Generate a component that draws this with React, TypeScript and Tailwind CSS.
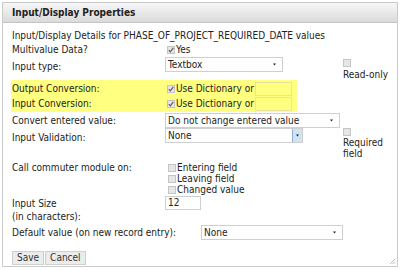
import React from "react";

function Box({ checked = false }: { checked?: boolean }) {
  return (
    <span className="inline-flex w-[8px] h-[8px] shrink-0 border border-[#c4c4c4] bg-[#e6e6e6] items-center justify-center mr-[1px]">
      {checked && (
        <svg width="6" height="6" viewBox="0 0 6 6">
          <path d="M0.8 3.2 L2.3 4.8 L5.3 0.9" stroke="#555" strokeWidth="1.1" fill="none" />
        </svg>
      )}
    </span>
  );
}

function Caret() {
  return (
    <svg width="5" height="3" viewBox="0 0 5 3" className="shrink-0">
      <path d="M1 0.5 L4 0.5 L2.5 2.5 Z" fill="#222" />
    </svg>
  );
}

function Select({ w, text, blue = false }: { w: string; text: string; blue?: boolean }) {
  return (
    <div className={`${w} h-[15px] shrink-0 border border-[#cfcfcf] bg-white flex items-center justify-between pl-[2px]`}>
      <span className="leading-none">{text}</span>
      {blue ? (
        <span className="w-[10px] h-[13px] bg-[#cfe3f7] border-l border-[#8db2dc] flex items-center justify-center">
          <Caret />
        </span>
      ) : (
        <span className="pr-[5px] flex items-center">
          <Caret />
        </span>
      )}
    </div>
  );
}

export default function App() {
  return (
    <div className="w-[400px] h-[270px] bg-white pt-[2px] pl-[2px] font-['DejaVu_Sans_Condensed','DejaVu_Sans',sans-serif] text-[10px] text-[#222] whitespace-nowrap">
      <div className="w-[396px] h-[265px] border border-[#cacaca] flex flex-col relative">
        <div className="h-[20px] bg-gradient-to-b from-[#f7f7f7] to-[#dadada] border-b border-[#c4c4c4] pl-[9px] flex items-center font-bold text-[10px] text-[#222]">
          Input/Display Properties
        </div>
        <div className="pl-[9px] flex flex-col">
          <div className="h-[13px] mt-[6px] flex items-center">Input/Display Details for PHASE_OF_PROJECT_REQUIRED_DATE values</div>
          <div className="h-[13px] mt-[1px] flex items-center">
            <span className="w-[155px]">Multivalue Data?</span>
            <Box checked />
            <span>Yes</span>
          </div>
          <div className="flex h-[23px] mt-[1px]">
            <span className="w-[153px] pt-[2px]">Input type:</span>
            <Select w="w-[118px]" text="Textbox" />
            <div className="ml-[60px] flex flex-col items-start pt-[2px]">
              <Box />
              <span className="mt-[2px] leading-[11px]">Read-only</span>
            </div>
          </div>
          <div className="w-[286px] bg-[#ffff80] flex flex-col -ml-[1px] pl-[1px] pt-[1px] pb-[1px]">
            <div className="flex h-[15px] items-center">
              <span className="w-[155px]">Output Conversion:</span>
              <Box checked />
              <span>Use Dictionary or</span>
              <span className="ml-[1px] w-[37px] h-[14px] border border-[#e6e69a]" />
            </div>
            <div className="flex h-[15px] items-center">
              <span className="w-[155px]">Input Conversion:</span>
              <Box checked />
              <span>Use Dictionary or</span>
              <span className="ml-[1px] w-[37px] h-[14px] border border-[#e6e69a]" />
            </div>
          </div>
          <div className="flex h-[15px] mt-[1px] items-center">
            <span className="w-[153px]">Convert entered value:</span>
            <Select w="w-[175px]" text="Do not change entered value" />
          </div>
          <div className="flex h-[33px]">
            <span className="w-[153px] pt-[2px]">Input Validation:</span>
            <Select w="w-[138px]" text="None" blue />
            <div className="ml-[40px] flex flex-col items-start">
              <Box />
              <span className="mt-[1px] leading-[11px]">Required<br />field</span>
            </div>
          </div>
          <div className="flex mt-[1px]">
            <span className="w-[156px] leading-[11px]">Call commuter module on:</span>
            <div className="flex flex-col leading-[11px]">
              <div className="flex items-center h-[11px]"><Box />Entering field</div>
              <div className="flex items-center h-[11px]"><Box />Leaving field</div>
              <div className="flex items-center h-[11px]"><Box />Changed value</div>
            </div>
          </div>
          <div className="flex mt-[1px]">
            <span className="w-[153px] leading-[13px] pt-[1px]">Input Size<br />(in characters):</span>
            <span className="w-[36px] h-[14px] border border-[#cfcfcf] pl-[2px] leading-[12px]">12</span>
          </div>
          <div className="flex items-center mt-[2px] h-[15px]">
            <span className="w-[189px]">Default value (on new record entry):</span>
            <Select w="w-[142px]" text="None" />
          </div>
          <div className="flex mt-[11px]">
            <button className="h-[14px] px-[4px] border border-[#cfcfcf] bg-[#ececec] leading-none text-[10px] text-[#333]">Save</button>
            <button className="h-[14px] px-[4px] ml-[1px] border border-[#cfcfcf] bg-[#ececec] leading-none text-[10px] text-[#333]">Cancel</button>
          </div>
        </div>
        <svg width="7" height="7" viewBox="0 0 7 7" className="absolute right-[1px] bottom-[1px]">
          <path d="M6 1 L1 6 M6 3.5 L3.5 6 M6 5.5 L5.5 6" stroke="#aaa" strokeWidth="0.8" />
        </svg>
      </div>
    </div>
  );
}
